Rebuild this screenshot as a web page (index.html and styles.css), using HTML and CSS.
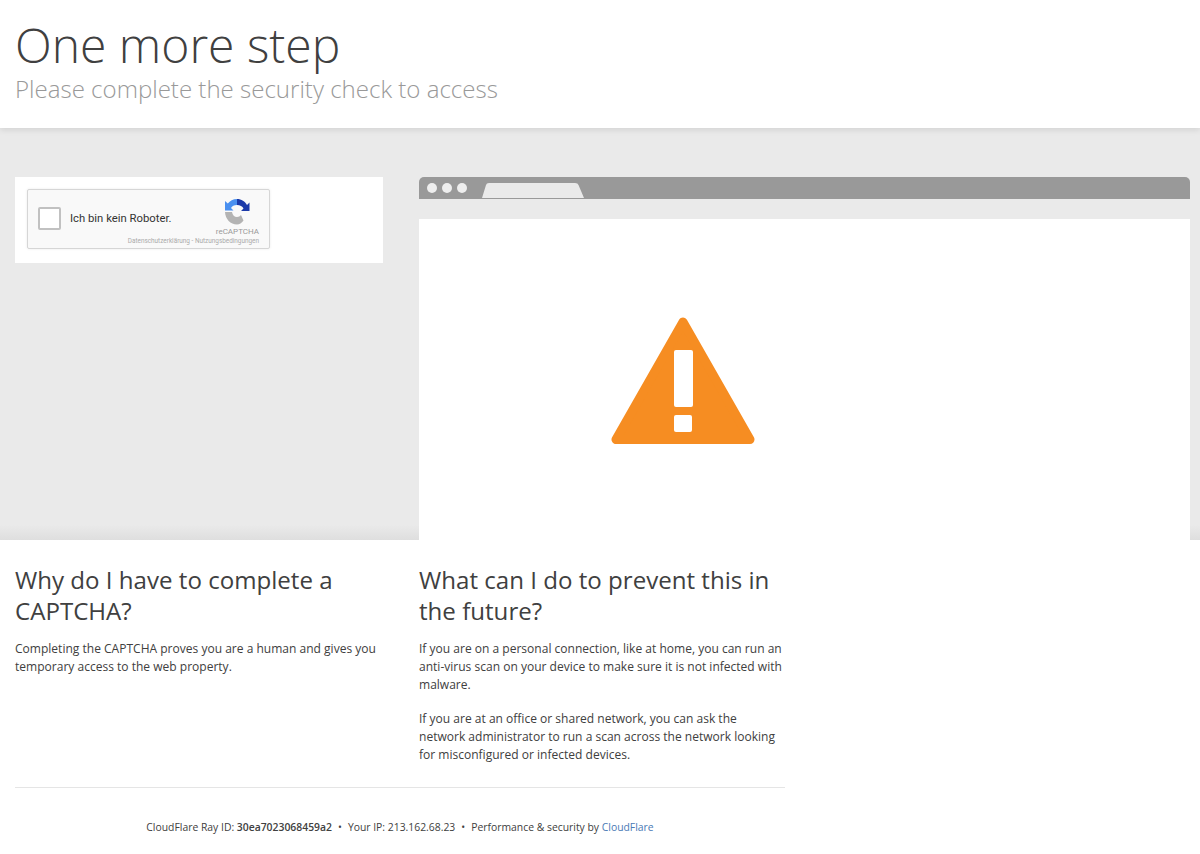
FILE: index.html
```html
<!DOCTYPE html>
<html lang="en">
<head>
<meta charset="utf-8">
<title>One more step</title>
<link rel="stylesheet" href="styles.css">
</head>
<body>
<header class="head">
  <h1 class="title">One more step</h1>
  <h2 class="subtitle">Please complete the security check to access</h2>
</header>
<section class="stage">
  <div class="captcha-card">
    <div class="widget">
      <span class="check"></span>
      <span class="robot">Ich bin kein Roboter.</span>
      <div class="brand">
        <svg class="re-logo" width="26" height="27" viewBox="0 0 26 27">
          <path fill="#b3b3b3" d="M1 14H8C8.400 17 10.500 19 13 19c1.800 0 3-.8 4-2l2.500 5.500C17.500 25 15.500 26.500 13 26.500 6.500 26.500 1.300 21 1 14z"/>
          <path fill="#4a90f0" d="M13 1C9 1 6 2.800 3.800 5.500L1 3V12.500H9.500L7 10C8 8 10 7 13 7z"/>
          <path fill="#1c3aa9" d="M13 1C17.500 1 21 3.500 23 7L25.500 4.500V13H17L19.500 10.500C18.500 8.300 16 7 13 7z"/>
        </svg>
        <span class="re-name">reCAPTCHA</span>
      </div>
      <span class="re-links">Datenschutzerklärung - Nutzungsbedingungen</span>
    </div>
  </div>
  <div class="browser">
    <div class="chrome">
      <span class="dot"></span><span class="dot"></span><span class="dot"></span>
      <svg class="tab" width="102" height="15" viewBox="0 0 102 15"><path fill="#eaeaea" d="M0 15 4 2Q4.500 0 7 0H93Q96 0 96.500 2L102 15z"/></svg>
    </div>
    <div class="viewport">
      <svg class="warn" width="144" height="127" viewBox="0 0 144 127">
        <polygon fill="#f68d22" stroke="#f68d22" stroke-width="9" stroke-linejoin="round" points="72,5 5,122.500 139,122.500"/>
        <rect fill="#fff" x="63" y="33" width="19" height="57" rx="2"/>
        <rect fill="#fff" x="63" y="98" width="18" height="17" rx="2"/>
      </svg>
    </div>
  </div>
</section>
<main class="info">
  <div class="columns">
    <div class="col-left">
      <h2 class="q">Why do I have to complete a CAPTCHA?</h2>
      <p class="a">Completing the CAPTCHA proves you are a human and gives you temporary access to the web property.</p>
    </div>
    <div class="col-right">
      <h2 class="q">What can I do to prevent this in the future?</h2>
      <p class="a">If you are on a personal connection, like at home, you can run an anti-virus scan on your device to make sure it is not infected with malware.</p>
      <p class="a">If you are at an office or shared network, you can ask the network administrator to run a scan across the network looking for misconfigured or infected devices.</p>
    </div>
  </div>
  <footer class="foot">
    <span>CloudFlare Ray ID: <strong class="ray">30ea7023068459a2</strong></span>
    <span class="sep">•</span>
    <span>Your IP: 213.162.68.23</span>
    <span class="sep">•</span>
    <span>Performance &amp; security by <a class="link" href="#">CloudFlare</a></span>
  </footer>
</main>
</body>
</html>
```
FILE: styles.css
```css
* { box-sizing: border-box; }
html, body { margin: 0; padding: 0; }
body { background: #fff; color: #404040; font-family: "Open Sans", "Liberation Sans", sans-serif; width: 1200px; height: 854px; overflow: hidden; }
.head { height: 128px; padding: 17px 15px 0; background: #fff; position: relative; z-index: 2; box-shadow: 0 2px 6px rgba(0,0,0,.1); }
.title { margin: 0; font-size: 48px; line-height: 56px; font-weight: 300; color: #404040; }
.subtitle { margin: 0; font-size: 24.050px; line-height: 31px; font-weight: 300; color: #999; }
.stage { height: 412px; background: linear-gradient(#eaeaea calc(100% - 15px), #dedede); display: flex; padding: 49px 0 0 15px; gap: 36px; overflow: hidden; }
.captcha-card { flex: none; width: 368px; height: 86px; background: #fff; padding: 12px; }
.widget { position: relative; width: 243px; height: 60px; background: #f9f9f9; border: 1px solid #d6d6d6; border-radius: 2px; box-shadow: 0 0 3px rgba(0,0,0,.08); display: flex; align-items: center; padding-left: 10px; }
.check { flex: none; width: 23px; height: 23px; margin-top: -1px; background: #fff; border: 2px solid #c1c1c1; border-radius: 2px; }
.robot { margin-left: 9px; margin-top: -1px; font-family: Roboto, "Liberation Sans", sans-serif; font-size: 11.300px; color: #333; }
.brand { position: absolute; top: 8px; right: 10px; display: flex; flex-direction: column; align-items: center; }
.re-logo { display: block; }
.re-name { font-family: Roboto, "Liberation Sans", sans-serif; font-size: 8px; line-height: 9px; margin-top: 2px; color: #999; }
.re-links { position: absolute; right: 10px; bottom: 3px; font-family: Roboto, "Liberation Sans", sans-serif; font-size: 6.400px; line-height: 7px; color: #aaa; }
.browser { flex: none; width: 771px; }
.chrome { height: 22px; background: #999; border-radius: 5px 5px 0 0; display: flex; align-items: center; gap: 5px; padding: 0 0 0 8px; position: relative; margin-bottom: 20px; }
.dot { width: 10px; height: 10px; border-radius: 50%; background: #eee; }
.tab { position: absolute; left: 63px; top: 6px; }
.viewport { height: 321px; background: #fff; padding: 98px 0 0 192px; }
.warn { display: block; }
.info { padding: 0 15px; }
.columns { display: grid; grid-template-columns: 368px 366px; gap: 36px; height: 248px; padding-top: 24px; border-bottom: 1px solid #e5e5e5; width: 770px; }
.q { margin: 0 0 14px; font-size: 24.100px; line-height: 31px; font-weight: 400; color: #404040; }
.a { margin: 0 0 16px; font-size: 12.040px; line-height: 18px; color: #404040; }
.foot { margin-top: 31px; width: 770px; display: flex; justify-content: center; gap: 5px; font-size: 10.380px; line-height: 16px; color: #404040; }
.ray { font-weight: 600; }
.sep { padding: 0 1px; }
.link { color: #4a7ab5; text-decoration: none; }
```
